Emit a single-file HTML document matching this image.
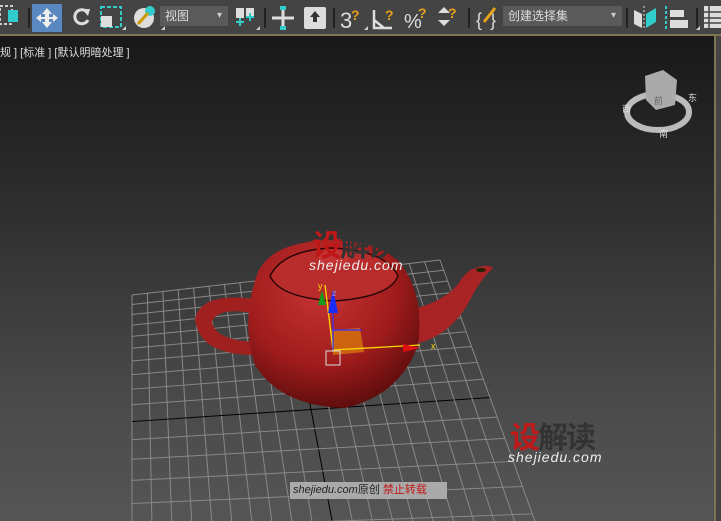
<!DOCTYPE html>
<html style="overflow:hidden"><head><meta charset="utf-8"><style>
html,body{margin:0;width:721px;height:521px;overflow:hidden}
body{background:#444;font-family:"Liberation Sans","Noto Sans CJK SC",sans-serif;position:relative}
#tb{position:absolute;left:0;top:0;width:721px;height:34px;background:#444}
#line{position:absolute;left:0;top:34px;width:721px;height:2px;background:#7d7552}
#vp{position:absolute;left:0;top:36px;width:714px;height:485px;background:linear-gradient(#181818 0%,#2e2e2e 35%,#4a4a4a 75%,#555 100%)}
#vpb{position:absolute;left:714px;top:36px;width:2px;height:485px;background:#7d7552}
#vpr{position:absolute;left:716px;top:36px;width:5px;height:485px;background:#444}
.lbl{position:absolute;left:0;top:44px;color:#ddd;font-size:11px}
.dd{position:absolute;background:#5a5a5a;color:#ddd;font-size:12px;height:20px;line-height:20px;padding-left:5px;box-sizing:border-box}
.dd:after{content:"▾";position:absolute;right:6px;top:0;font-size:10px;color:#ccc}
.sep{position:absolute;top:8px;width:2px;height:20px;background:#222}
.wm{position:absolute;font-weight:bold}
</style></head><body>
<div id="tb"></div>
<svg style="position:absolute;left:0;top:0" width="721" height="34">
<rect x="0" y="6" width="12" height="18" fill="none" stroke="#ccc" stroke-dasharray="3 2" stroke-width="2"/>
<rect x="8" y="10" width="10" height="12" fill="#3cc"/>
<rect x="32" y="4" width="30" height="28" fill="#5a88c0"/>
<path d="M47 8 L52 14 H49 V17 H53 V14 L58 18 L53 22 V19 H49 V22 H52 L47 28 L42 22 H45 V19 H41 V22 L36 18 L41 14 V17 H45 V14 H42Z" fill="#eee"/>
<path d="M87 12 A7 7 0 1 0 88 20" fill="none" stroke="#ddd" stroke-width="3"/><path d="M82 9 L90 9 L88 16Z" fill="#ddd"/>
<rect x="101" y="7" width="20" height="20" fill="none" stroke="#3cc" stroke-width="2" stroke-dasharray="4 2"/><rect x="101" y="16" width="11" height="11" fill="#ddd"/>
<circle cx="144" cy="18" r="10" fill="#ddd"/><circle cx="150" cy="11" r="5" fill="#3cc"/><path d="M138 24 L148 13" stroke="#c90" stroke-width="3"/>
<path d="M236 8 h8 v10 h-8z M246 8 h8 v10 h-8z" fill="#ddd"/><path d="M240 18v8 M236 22h8 M250 13v8 M246 17h8" stroke="#3cc" stroke-width="2"/>
<path d="M283 8v22 M272 18h22" stroke="#ddd" stroke-width="3"/><rect x="280" y="6" width="6" height="4" fill="#3cc"/><rect x="280" y="26" width="6" height="4" fill="#3cc"/>
<rect x="304" y="7" width="22" height="22" rx="2" fill="#ddd"/><path d="M315 11 l5 6 h-3 v5 h-4 v-5 h-3z" fill="#333"/>
<text x="340" y="28" font-size="22" fill="#ddd" font-family="Liberation Sans">3</text><text x="351" y="20" font-size="14" fill="#e9a21a" font-weight="bold">?</text>
<path d="M374 10 V28 H392 M374 20 L384 28" stroke="#ddd" stroke-width="2.5" fill="none"/><text x="385" y="20" font-size="14" fill="#e9a21a" font-weight="bold">?</text>
<text x="404" y="28" font-size="20" fill="#ddd">%</text><text x="418" y="18" font-size="14" fill="#e9a21a" font-weight="bold">?</text>
<path d="M438 13 l6 -6 l6 6z M438 20 l6 6 l6 -6z" fill="#ddd"/><text x="448" y="18" font-size="14" fill="#e9a21a" font-weight="bold">?</text>
<text x="476" y="26" font-size="18" fill="#ddd">{</text><text x="490" y="26" font-size="18" fill="#ddd">}</text><path d="M484 22 L495 8" stroke="#e9a21a" stroke-width="3"/>
<path d="M634 10 L642 14 V28 L634 24Z" fill="#ddd"/><path d="M646 14 L656 8 V22 L646 28Z" fill="#3cc"/><path d="M644 6V30" stroke="#ddd" stroke-dasharray="2 2"/>
<path d="M666 6V30" stroke="#3cc" stroke-width="2" stroke-dasharray="3 2"/><rect x="670" y="10" width="14" height="7" fill="#ddd"/><rect x="670" y="20" width="18" height="8" fill="#ddd"/>
<rect x="704" y="6" width="17" height="22" fill="#ddd"/><path d="M704 12h17M704 18h17M704 23h17M709 6v22" stroke="#444" stroke-width="1.5"/>
<path d="M122 30l4-4v4z M161 30l4-4v4z M256 30l4-4v4z M364 30l4-4v4z M696 30l4-4v4z" fill="#ccc"/>
</svg>
<div class="sep" style="left:28px"></div><div class="sep" style="left:264px"></div><div class="sep" style="left:333px"></div><div class="sep" style="left:468px"></div><div class="sep" style="left:626px"></div><div class="sep" style="left:696px"></div>
<div class="dd" style="left:160px;top:6px;width:68px">视图</div>
<div class="dd" style="left:503px;top:6px;width:119px">创建选择集</div>
<div id="line"></div>
<div id="vp"></div><div id="vpb"></div><div id="vpr"></div>
<div class="lbl">规 ] [标准 ] [默认明暗处理 ]</div>
<svg id="g" style="position:absolute;left:0;top:0" width="714" height="521"></svg>
<svg style="position:absolute;left:0;top:0" width="714" height="521">
<defs><radialGradient id="r" cx="0.42" cy="0.3" r="0.8"><stop offset="0" stop-color="#c83434"/><stop offset="0.55" stop-color="#a01c1c"/><stop offset="1" stop-color="#4a0808"/></radialGradient></defs>
<path d="M410 310 Q450 300 462 278 L470 270 Q488 263 493 268 Q480 280 470 300 Q450 338 410 345Z" fill="#a82424"/>
<ellipse cx="481" cy="270" rx="5" ry="2" fill="#220"/>
<path d="M262 300 Q200 290 195 320 Q200 355 255 355 L255 342 Q215 340 212 322 Q218 305 262 315Z" fill="#a02020"/>
<path d="M258 272 Q272 242 330 240 Q392 242 406 272 Q424 300 418 345 Q400 395 345 408 Q280 406 255 365 Q240 320 258 272Z" fill="url(#r)"/>
<path d="M270 276 Q283 250 332 248 Q385 250 398 276 Q390 297 335 301 Q280 298 270 276Z" fill="#b82c2c" stroke="#2a0606" stroke-width="1.5"/>
<ellipse cx="333" cy="258" rx="15" ry="9" fill="#c43434"/>
<path d="M330 330 L360 328 L364 352 L333 355Z" fill="#d26a10" opacity="0.9"/>
<path d="M325 285 L333 350 L420 345" stroke="#ffd800" stroke-width="1.3" fill="none"/>
<path d="M333 350 V300 M333 330 L362 330" stroke="#3030ff" stroke-width="1.2"/>
<path d="M328 313 L333 290 L338 313Z" fill="#1a2aff"/><path d="M318 305 L322 290 L326 305Z" fill="#1a9a1a"/>
<path d="M403 344 L420 348 L403 352Z" fill="#e01010"/>
<rect x="326" y="351" width="14" height="14" fill="none" stroke="#ddd"/>
<text x="318" y="289" font-size="9" fill="#ffd800">y</text><text x="332" y="296" font-size="9" fill="#88f">z</text><text x="431" y="349" font-size="9" fill="#ffd800">x</text>
<ellipse cx="658" cy="112" rx="31" ry="18" fill="none" stroke="#bbb" stroke-width="6"/>
<path d="M645 76 L663 70 L677 80 L675 105 L656 110 L646 100Z" fill="#aaa"/>
<text x="622" y="112" font-size="9" fill="#ddd">西</text><text x="688" y="101" font-size="9" fill="#ddd">东</text><text x="659" y="137" font-size="9" fill="#ddd">南</text><text x="654" y="104" font-size="9" fill="#666">前</text>
</svg>
<div class="wm" style="left:312px;top:221px;font-size:30px;color:#c01818;letter-spacing:-2px">设<span style="color:#333">解读</span></div>
<div style="position:absolute;left:309px;top:257px;font-size:14px;font-style:italic;color:#eee;letter-spacing:1px">shejiedu.com</div>
<div class="wm" style="left:510px;top:413px;font-size:30px;color:#c01818;letter-spacing:-2px">设<span style="color:#333">解读</span></div>
<div style="position:absolute;left:508px;top:449px;font-size:14px;font-style:italic;color:#eee;letter-spacing:1px">shejiedu.com</div>
<div style="position:absolute;left:290px;top:482px;width:157px;height:17px;background:#aaa;font-size:11px;line-height:17px;color:#222;padding-left:3px;box-sizing:border-box"><i>shejiedu.com</i>原创 <span style="color:#c01818">禁止转载</span></div>
<script>
var g=document.getElementById('g'),s='';
var BL=[132,295],BR=[440,260],FL=[132,700],FR=[600,700];
function P(u,v){var w=v/(v+2.2*(1-v));var L=[BL[0]+(FL[0]-BL[0])*w,BL[1]+(FL[1]-BL[1])*w],R=[BR[0]+(FR[0]-BR[0])*w,BR[1]+(FR[1]-BR[1])*w];return [L[0]+(R[0]-L[0])*u,L[1]+(R[1]-L[1])*u];}
var N=20;
for(var i=0;i<=N;i++){var a=P(i/N,0),b=P(i/N,1);s+='<line x1="'+a[0]+'" y1="'+a[1]+'" x2="'+b[0]+'" y2="'+b[1]+'" stroke="'+(i==10?'#000':'#888')+'" stroke-width="1"/>';
var c=P(0,i/N),d=P(1,i/N);s+='<line x1="'+c[0]+'" y1="'+c[1]+'" x2="'+d[0]+'" y2="'+d[1]+'" stroke="'+(i==10?'#000':'#888')+'" stroke-width="1"/>';}
g.innerHTML=s;
</script>
</body></html>
